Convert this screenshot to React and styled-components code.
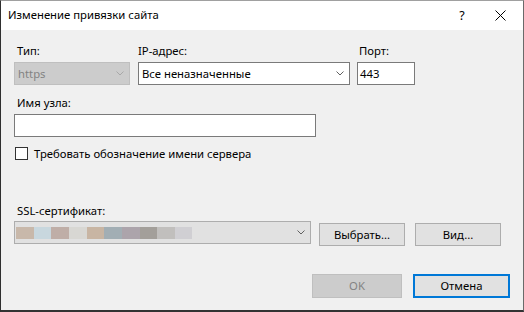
import React from "react";
import styled, { createGlobalStyle } from "styled-components";

const Global = createGlobalStyle`
  html, body { margin: 0; padding: 0; background: #f0f0f0; }
  body { font-family: "Noto Sans", "Segoe UI", sans-serif; font-size: 11.3px; color: #000; }
`;

const Window = styled.div`
  width: 524px;
  height: 312px;
  box-sizing: border-box;
  border-left: 1px solid #2f2f2f;
  border-right: 1px solid #6a6a6a;
  border-top: 1px solid #a0a0a0;
  border-bottom: 2px solid #333;
  background: #f0f0f0;
  display: flex;
  flex-direction: column;
  overflow: hidden;
`;

const TitleBar = styled.div`
  height: 29px;
  flex: none;
  background: #fff;
  display: flex;
  align-items: center;
  padding-left: 7px;
`;

const Title = styled.div`
  flex: 1;
  font-size: 11.3px;
  line-height: 16px;
  padding-bottom: 1px;
`;

const TitleBtn = styled.div`
  width: ${(p) => p.$w}px;
  height: 29px;
  display: flex;
  align-items: center;
  justify-content: center;
  font-size: 12.5px;
`;

const Content = styled.div`
  padding: 13px 0 0 13px;
  display: flex;
  flex-direction: column;
`;

const Row = styled.div`
  display: flex;
  align-items: flex-start;
`;

const Field = styled.div`
  display: flex;
  flex-direction: column;
  width: ${(p) => (p.$w ? `${p.$w}px` : "auto")};
  margin-right: ${(p) => p.$mr || 0}px;
  margin-top: ${(p) => p.$mt || 0}px;
`;

const Label = styled.div`
  line-height: 16px;
  height: 16px;
  padding-left: ${(p) => p.$pl ?? 3}px;
  margin-bottom: ${(p) => p.$mb ?? 3}px;
  white-space: nowrap;
`;

const Combo = styled.div`
  box-sizing: border-box;
  flex: none;
  height: 23px;
  width: ${(p) => p.$w}px;
  border: 1px solid ${(p) => (p.$disabled ? "#bfbfbf" : p.$gray ? "#adadad" : "#7a7a7a")};
  background: ${(p) => (p.$disabled ? "#cccccc" : p.$gray ? "#e1e1e1" : "#fff")};
  color: ${(p) => (p.$disabled ? "#838383" : "#000")};
  display: flex;
  align-items: center;
  padding-left: ${(p) => p.$pl ?? 3}px;
  padding-right: 5px;
`;

const ComboText = styled.div`
  flex: 1;
  line-height: 16px;
  white-space: nowrap;
`;

const Input = styled.div`
  box-sizing: border-box;
  height: 23px;
  width: ${(p) => p.$w}px;
  border: 1px solid #7a7a7a;
  background: #fff;
  padding-left: 2px;
  line-height: 21px;
`;

const Chevron = ({ color }) => (
  <svg width="8" height="5" viewBox="0 0 8 5">
    <path d="M0.5 0.5 L4 4 L7.5 0.5" fill="none" stroke={color} strokeWidth="1" />
  </svg>
);

const CheckRow = styled.div`
  display: flex;
  align-items: center;
  height: 13px;
  line-height: 13px;
  margin-top: 10px;
  margin-left: 1px;
  white-space: nowrap;
`;

const Box = styled.div`
  width: 13px;
  height: 13px;
  flex: none;
  box-sizing: border-box;
  border: 1px solid #333;
  background: #fff;
  margin-right: 6px;
`;

const Blur = styled.div`
  display: flex;
  height: 12px;
`;

const Cell = styled.div`
  width: ${(p) => p.$w}px;
  height: 12px;
  background: ${(p) => p.$c};
`;

const SslRow = styled.div`
  display: flex;
  align-items: flex-start;
`;

const Button = styled.div`
  box-sizing: border-box;
  flex: none;
  width: ${(p) => p.$w}px;
  height: ${(p) => p.$h || 23}px;
  margin-left: ${(p) => p.$ml || 0}px;
  margin-top: ${(p) => p.$mt || 0}px;
  border: ${(p) => (p.$focus ? "2px solid #0078d7" : p.$disabled ? "1px solid #bfbfbf" : "1px solid #adadad")};
  background: ${(p) => (p.$disabled ? "#cccccc" : "#e1e1e1")};
  color: ${(p) => (p.$disabled ? "#838383" : "#000")};
  display: flex;
  align-items: center;
  justify-content: center;
  line-height: 16px;
`;

const Footer = styled.div`
  display: flex;
  justify-content: flex-end;
  padding-right: 13px;
  margin-top: 28px;
`;

const cells = [
  ["#c8b8aa", 18], ["#c8d7de", 17], ["#bfaea7", 18], ["#d8d7d3", 18], ["#c8b5a3", 17],
  ["#a2aeb4", 18], ["#aca4ab", 18], ["#a39f9a", 17], ["#c1bfbd", 18], ["#d0cfd3", 17],
];

export default function App() {
  return (
    <>
      <Global />
      <Window>
        <TitleBar>
          <Title>Изменение привязки сайта</Title>
          <TitleBtn $w={30}>?</TitleBtn>
          <TitleBtn $w={46}>
            <svg width="11" height="11" viewBox="0 0 11 11">
              <path d="M0.5 0.5 L10.5 10.5 M10.5 0.5 L0.5 10.5" stroke="#000" strokeWidth="1" fill="none" />
            </svg>
          </TitleBtn>
        </TitleBar>
        <Content>
          <Row>
            <Field $w={116} $mr={8}>
              <Label>Тип:</Label>
              <Combo $w={116} $disabled>
                <ComboText>https</ComboText>
                <Chevron color="#a8a8a8" />
              </Combo>
            </Field>
            <Field $w={212} $mr={7}>
              <Label $pl={0}>IP-адрес:</Label>
              <Combo $w={212}>
                <ComboText>Все неназначенные</ComboText>
                <Chevron color="#606060" />
              </Combo>
            </Field>
            <Field $w={58}>
              <Label $pl={2}>Порт:</Label>
              <Input $w={58}>443</Input>
            </Field>
          </Row>
          <Field $w={302} $mt={10}>
            <Label>Имя узла:</Label>
            <Input $w={302} />
          </Field>
          <CheckRow>
            <Box />
            <span>Требовать обозначение имени сервера</span>
          </CheckRow>
          <Field $mt={43}>
            <Label $mb={2}>SSL-сертификат:</Label>
            <SslRow>
              <Combo $w={297} $gray $pl={1}>
                <ComboText>
                  <Blur>
                    {cells.map(([c, w], i) => (
                      <Cell key={i} $c={c} $w={w} />
                    ))}
                  </Blur>
                </ComboText>
                <Chevron color="#606060" />
              </Combo>
              <Button $w={86} $ml={8} $mt={2}>Выбрать...</Button>
              <Button $w={86} $ml={10} $mt={2}>Вид...</Button>
            </SslRow>
          </Field>
        </Content>
        <Footer>
          <Button $w={90} $h={24} $disabled>OK</Button>
          <Button $w={97} $h={24} $ml={11} $focus>Отмена</Button>
        </Footer>
      </Window>
    </>
  );
}
